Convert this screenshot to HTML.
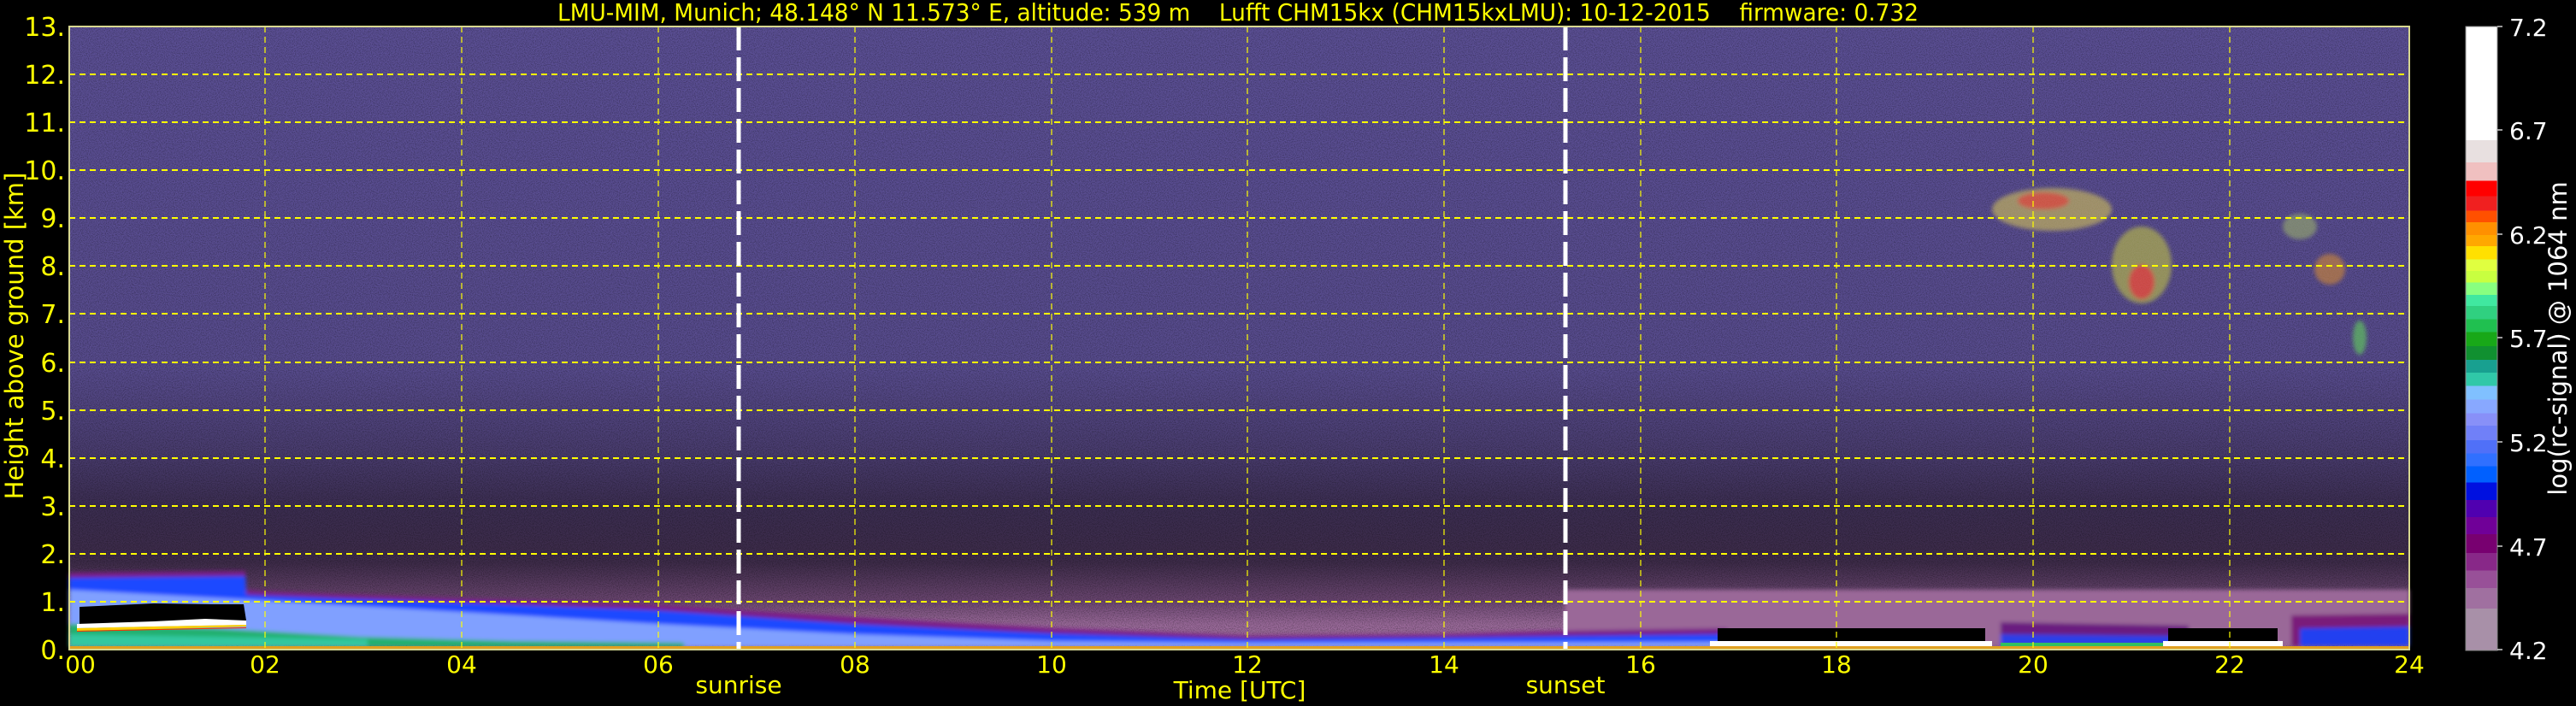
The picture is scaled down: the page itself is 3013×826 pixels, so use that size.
<!DOCTYPE html>
<html><head><meta charset="utf-8"><style>
html,body{margin:0;padding:0;background:#000;}
svg{display:block;}
text{font-family:"DejaVu Sans","Liberation Sans",sans-serif;}
</style></head><body>
<svg width="3013" height="826" viewBox="0 0 3013 826" xmlns="http://www.w3.org/2000/svg">
<defs>
<linearGradient id="bg" x1="0" y1="31" x2="0" y2="760" gradientUnits="userSpaceOnUse">
<stop offset="0" stop-color="#5c5096"/>
<stop offset="0.55" stop-color="#584c8e"/>
<stop offset="0.68" stop-color="#4a3d70"/>
<stop offset="0.77" stop-color="#3c2e52"/>
<stop offset="0.86" stop-color="#3e2c4a"/>
<stop offset="0.92" stop-color="#6a4670"/>
<stop offset="0.96" stop-color="#9a6a9a"/>
<stop offset="1" stop-color="#9a6a9a"/>
</linearGradient>
<linearGradient id="cb" x1="0" y1="31" x2="0" y2="761" gradientUnits="userSpaceOnUse">
<stop offset="0" stop-color="#ffffff"/><stop offset="0.182" stop-color="#ffffff"/>
<stop offset="0.182" stop-color="#e8e0e0"/><stop offset="0.218" stop-color="#e8e0e0"/>
<stop offset="0.218" stop-color="#f0c0c0"/><stop offset="0.247" stop-color="#f0c0c0"/>
<stop offset="0.247" stop-color="#ff0000"/><stop offset="0.272" stop-color="#ff0000"/>
<stop offset="0.272" stop-color="#f02020"/><stop offset="0.295" stop-color="#f02020"/>
<stop offset="0.295" stop-color="#ff5000"/><stop offset="0.314" stop-color="#ff5000"/>
<stop offset="0.314" stop-color="#ff9000"/><stop offset="0.334" stop-color="#ff9000"/>
<stop offset="0.334" stop-color="#ffa800"/><stop offset="0.352" stop-color="#ffa800"/>
<stop offset="0.352" stop-color="#ffe000"/><stop offset="0.373" stop-color="#ffe000"/>
<stop offset="0.373" stop-color="#e0ff40"/><stop offset="0.392" stop-color="#e0ff40"/>
<stop offset="0.392" stop-color="#c8ff40"/><stop offset="0.410" stop-color="#c8ff40"/>
<stop offset="0.410" stop-color="#88ff80"/><stop offset="0.430" stop-color="#88ff80"/>
<stop offset="0.430" stop-color="#40e8a0"/><stop offset="0.448" stop-color="#40e8a0"/>
<stop offset="0.448" stop-color="#30d080"/><stop offset="0.469" stop-color="#30d080"/>
<stop offset="0.469" stop-color="#20c050"/><stop offset="0.490" stop-color="#20c050"/>
<stop offset="0.490" stop-color="#18a818"/><stop offset="0.512" stop-color="#18a818"/>
<stop offset="0.512" stop-color="#109030"/><stop offset="0.534" stop-color="#109030"/>
<stop offset="0.534" stop-color="#18a090"/><stop offset="0.555" stop-color="#18a090"/>
<stop offset="0.555" stop-color="#30c8a8"/><stop offset="0.576" stop-color="#30c8a8"/>
<stop offset="0.576" stop-color="#80c0ff"/><stop offset="0.598" stop-color="#80c0ff"/>
<stop offset="0.598" stop-color="#88a8ff"/><stop offset="0.620" stop-color="#88a8ff"/>
<stop offset="0.620" stop-color="#8890f8"/><stop offset="0.640" stop-color="#8890f8"/>
<stop offset="0.640" stop-color="#7080f8"/><stop offset="0.663" stop-color="#7080f8"/>
<stop offset="0.663" stop-color="#5070f8"/><stop offset="0.684" stop-color="#5070f8"/>
<stop offset="0.684" stop-color="#3070ff"/><stop offset="0.705" stop-color="#3070ff"/>
<stop offset="0.705" stop-color="#0060ff"/><stop offset="0.731" stop-color="#0060ff"/>
<stop offset="0.731" stop-color="#0010e0"/><stop offset="0.759" stop-color="#0010e0"/>
<stop offset="0.759" stop-color="#5000b0"/><stop offset="0.786" stop-color="#5000b0"/>
<stop offset="0.786" stop-color="#700098"/><stop offset="0.814" stop-color="#700098"/>
<stop offset="0.814" stop-color="#780070"/><stop offset="0.844" stop-color="#780070"/>
<stop offset="0.844" stop-color="#882888"/><stop offset="0.872" stop-color="#882888"/>
<stop offset="0.872" stop-color="#985098"/><stop offset="0.900" stop-color="#985098"/>
<stop offset="0.900" stop-color="#a070a0"/><stop offset="0.933" stop-color="#a070a0"/>
<stop offset="0.933" stop-color="#a890a8"/><stop offset="1" stop-color="#a890a8"/>
</linearGradient>
<filter id="nz" x="0" y="0" width="100%" height="100%">
<feTurbulence type="fractalNoise" baseFrequency="0.9" numOctaves="1" seed="3"/>
<feColorMatrix type="matrix" values="0 0 0 0 0  0 0 0 0 0  0 0 0 0 0  0 0 0 -2.2 1.35"/>
<feComposite in2="SourceGraphic" operator="in"/>
</filter>
<filter id="bl"><feGaussianBlur stdDeviation="2.5"/></filter>
</defs>

<rect x="81" y="31" width="2737" height="729" fill="url(#bg)"/>
<rect x="81" y="31" width="2737" height="729" fill="#000" filter="url(#nz)" opacity="0.35"/>

<g filter="url(#bl)">
<rect x="1830" y="690" width="988" height="65" fill="#9a6898"/>
<polygon fill="#7a1a88" points="81,670 287,668 288,690 310,692 540,700 770,708 1000,722 1230,735 1460,744 1690,742 1830,738 2020,735 2020,750 81,750"/>
<polygon fill="#1a48ff" points="81,676 287,674 288,696 310,697 540,705 770,714 1000,730 1230,741 1460,748 1690,746 1830,744 2020,742 2020,755 81,755"/>
<polygon fill="#80a0ff" points="81,690 300,702 540,716 770,730 1000,742 1230,750 1460,752 2020,751 2020,757 81,757"/>
<polygon fill="#6a1a80" points="2340,728 2560,732 2560,756 2340,756"/>
<polygon fill="#2a40e8" points="2340,742 2560,744 2560,756 2340,756"/>
<polygon fill="#7a1a7a" points="2680,720 2818,718 2818,756 2680,756"/>
<polygon fill="#2040f0" points="2690,735 2818,733 2818,756 2690,756"/>
<polygon fill="#20b070" points="81,730 250,735 420,745 600,750 800,752 800,757 81,757"/>
<polygon fill="#30c8a0" points="81,742 430,748 430,757 81,757"/>
</g>
<polygon fill="#000" points="93,710 180,706 250,707 285,707 288,726 250,728 180,730 93,733"/>
<polygon fill="#ffffff" points="90,730 180,727 240,724 288,726 288,731 180,733 90,735"/>
<polygon fill="#ffd000" points="90,735 180,733 288,731 288,733 180,736 90,738"/>
<polygon fill="#ff3000" points="90,738 288,734 288,735 90,739"/>
<rect x="2009" y="735" width="313" height="15" fill="#000"/>
<rect x="2000" y="750" width="330" height="6" fill="#fff"/>
<rect x="2536" y="735" width="128" height="15" fill="#000"/>
<rect x="2530" y="750" width="140" height="6" fill="#fff"/>
<rect x="2340" y="752" width="190" height="5" fill="#30c060"/>
<rect x="81" y="756" width="2737" height="3" fill="#e0a020"/>

<g filter="url(#bl)" opacity="0.7">
<ellipse cx="2400" cy="245" rx="70" ry="25" fill="#c0b060"/>
<ellipse cx="2390" cy="235" rx="30" ry="10" fill="#ff6030"/>
<ellipse cx="2505" cy="310" rx="35" ry="45" fill="#b0b050"/>
<ellipse cx="2505" cy="330" rx="15" ry="20" fill="#ff5030"/>
<ellipse cx="2690" cy="265" rx="20" ry="15" fill="#90a070"/>
<ellipse cx="2725" cy="315" rx="18" ry="18" fill="#c08040"/>
<ellipse cx="2760" cy="395" rx="8" ry="20" fill="#60c060"/>
</g>

<g stroke="#ffff00" stroke-width="2" stroke-dasharray="7,5" fill="none">
<line x1="81" x2="2818" y1="704" y2="704"/><line x1="81" x2="2818" y1="648" y2="648"/>
<line x1="81" x2="2818" y1="592" y2="592"/><line x1="81" x2="2818" y1="536" y2="536"/>
<line x1="81" x2="2818" y1="480" y2="480"/><line x1="81" x2="2818" y1="424" y2="424"/>
<line x1="81" x2="2818" y1="367" y2="367"/><line x1="81" x2="2818" y1="311" y2="311"/>
<line x1="81" x2="2818" y1="255" y2="255"/><line x1="81" x2="2818" y1="199" y2="199"/>
<line x1="81" x2="2818" y1="143" y2="143"/><line x1="81" x2="2818" y1="87" y2="87"/>
</g>
<g stroke="#ffff00" stroke-width="1.2" stroke-dasharray="7,5" fill="none">
<line y1="31" y2="760" x1="310" x2="310"/><line y1="31" y2="760" x1="540" x2="540"/>
<line y1="31" y2="760" x1="770" x2="770"/><line y1="31" y2="760" x1="1000" x2="1000"/>
<line y1="31" y2="760" x1="1230" x2="1230"/><line y1="31" y2="760" x1="1459" x2="1459"/>
<line y1="31" y2="760" x1="1689" x2="1689"/><line y1="31" y2="760" x1="1919" x2="1919"/>
<line y1="31" y2="760" x1="2148" x2="2148"/><line y1="31" y2="760" x1="2378" x2="2378"/>
<line y1="31" y2="760" x1="2608" x2="2608"/>
</g>
<g stroke="#fff" stroke-width="5" stroke-dasharray="28,8">
<line x1="864" x2="864" y1="31" y2="760"/>
<line x1="1831" x2="1831" y1="31" y2="760"/>
</g>
<rect x="81" y="31" width="2737" height="729" fill="none" stroke="#d8d890" stroke-width="2"/>

<text x="652" y="24" font-size="28" fill="#ffff00" textLength="1592" lengthAdjust="spacingAndGlyphs" xml:space="preserve" style="white-space:pre">LMU-MIM, Munich; 48.148° N 11.573° E, altitude: 539 m&#160;&#160;&#160;&#160;Lufft CHM15kx (CHM15kxLMU): 10-12-2015&#160;&#160;&#160;&#160;firmware: 0.732</text>

<g font-size="30" fill="#ffff00" text-anchor="end">
<text x="76" y="42">13.</text><text x="76" y="98">12.</text><text x="76" y="154">11.</text>
<text x="76" y="210">10.</text><text x="76" y="266">9.</text><text x="76" y="322">8.</text>
<text x="76" y="378">7.</text><text x="76" y="435">6.</text><text x="76" y="491">5.</text>
<text x="76" y="547">4.</text><text x="76" y="603">3.</text><text x="76" y="659">2.</text>
<text x="76" y="715">1.</text><text x="76" y="771">0.</text>
</g>
<text transform="translate(27,393) rotate(-90)" font-size="29" fill="#ffff00" text-anchor="middle">Height above ground [km]</text>

<g font-size="28" fill="#ffff00" text-anchor="middle">
<text x="94" y="787">00</text><text x="310" y="787">02</text><text x="540" y="787">04</text>
<text x="770" y="787">06</text><text x="1000" y="787">08</text><text x="1230" y="787">10</text>
<text x="1459" y="787">12</text><text x="1689" y="787">14</text><text x="1919" y="787">16</text>
<text x="2148" y="787">18</text><text x="2378" y="787">20</text><text x="2608" y="787">22</text>
<text x="2818" y="787">24</text>
<text x="864" y="811">sunrise</text>
<text x="1831" y="811">sunset</text>
<text x="1450" y="817">Time [UTC]</text>
</g>

<rect x="2884" y="31" width="37" height="730" fill="url(#cb)" stroke="#888" stroke-width="1"/>
<g font-size="28" fill="#ffffff">
<text x="2935" y="42">7.2</text><text x="2935" y="163">6.7</text><text x="2935" y="285">6.2</text>
<text x="2935" y="406">5.7</text><text x="2935" y="528">5.2</text><text x="2935" y="650">4.7</text>
<text x="2935" y="771">4.2</text>
</g>
<g stroke="#ccc" stroke-width="1.5">
<line x1="2921" x2="2927" y1="31" y2="31"/><line x1="2921" x2="2927" y1="152" y2="152"/>
<line x1="2921" x2="2927" y1="274" y2="274"/><line x1="2921" x2="2927" y1="395" y2="395"/>
<line x1="2921" x2="2927" y1="517" y2="517"/><line x1="2921" x2="2927" y1="639" y2="639"/>
<line x1="2921" x2="2927" y1="760" y2="760"/>
</g>
<text transform="translate(3002,396) rotate(-90)" font-size="29" fill="#ffffff" text-anchor="middle">log(rc-signal) @ 1064 nm</text>
</svg>
</body></html>
